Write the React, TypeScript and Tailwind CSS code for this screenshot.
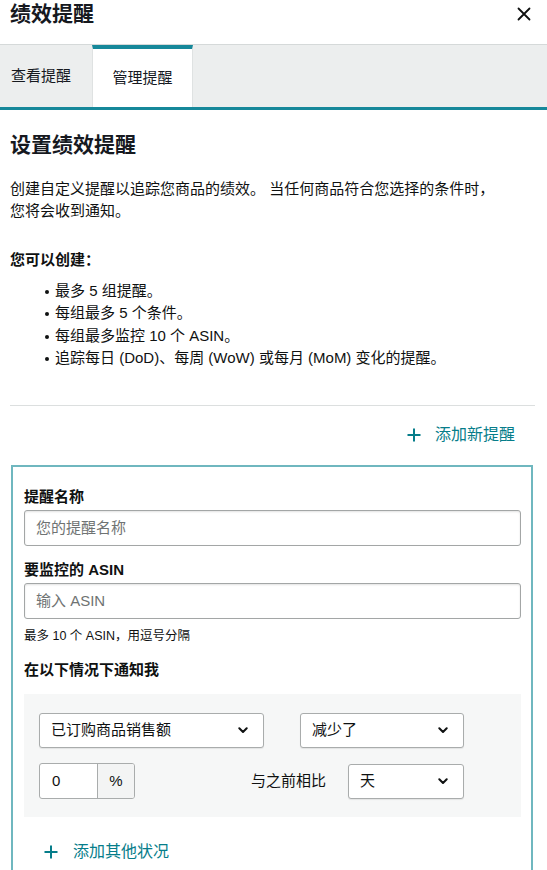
import React from "react";

const FONT = '"Liberation Sans", "Noto Sans CJK SC", sans-serif';

function Chevron() {
  return (
    <svg width="10" height="7" viewBox="0 0 10 7" className="shrink-0">
      <path d="M1.3 1.3 L5 5 L8.7 1.3" fill="none" stroke="#0f1111" strokeWidth="2" strokeLinecap="round" strokeLinejoin="round" />
    </svg>
  );
}

function Plus() {
  return (
    <svg width="14" height="14" viewBox="0 0 14 14" className="shrink-0">
      <path d="M7 0.5 V13.5 M0.5 7 H13.5" stroke="#067d8a" strokeWidth="2" />
    </svg>
  );
}

function Select({ label, w }: { label: string; w: string }) {
  return (
    <div
      className={`${w} h-[35px] bg-white border border-[#a9acac] rounded-[3px] shadow-[0_1px_1px_rgba(0,0,0,0.08)] flex items-center justify-between pl-[11px] pr-[15px] text-[15px] text-[#0f1111]`}
    >
      <span>{label}</span>
      <Chevron />
    </div>
  );
}

export default function App() {
  return (
    <div className="w-[547px] h-[870px] overflow-hidden bg-white text-[#0f1111]" style={{ fontFamily: FONT }}>
      {/* header */}
      <div className="h-[44px] flex items-start justify-between pl-[10px] pr-[16px]">
        <h1 className="text-[21px] leading-[28px] font-bold text-[#16191f]">绩效提醒</h1>
        <svg width="14" height="14" viewBox="0 0 14 14" className="mt-[7px]">
          <path d="M1.5 1.5 L12.5 12.5 M12.5 1.5 L1.5 12.5" stroke="#0f1111" strokeWidth="1.8" strokeLinecap="round" />
        </svg>
      </div>

      {/* tabs */}
      <div className="border-t border-[#d5d9d9] bg-[#eceeee] border-b-[3px] border-b-[#16889a] flex h-[66px]">
        <div className="pl-[11px] pr-[21px] flex items-center text-[15px] text-[#16191f]">查看提醒</div>
        <div className="w-[101px] bg-white border-t-[4px] border-t-[#16889a] border-x border-x-[#dfe2e2] flex items-center justify-center text-[15px] text-[#16191f]">
          管理提醒
        </div>
      </div>

      {/* content */}
      <div className="px-[10px]">
        <h2 className="mt-[21px] text-[21px] leading-[28px] font-bold text-[#16191f]">设置绩效提醒</h2>
        <p className="mt-[19px] w-[490px] text-[15px] leading-[22px] text-[#0f1111]">
          创建自定义提醒以追踪您商品的绩效。 当任何商品符合您选择的条件时，您将会收到通知。
        </p>
        <p className="mt-[27px] text-[15px] leading-[22px] font-bold">您可以创建：</p>
        <ul className="mt-[9px] pl-[35px] text-[15px] leading-[22.3px]">
          {[
            "最多 5 组提醒。",
            "每组最多 5 个条件。",
            "每组最多监控 10 个 ASIN。",
            "追踪每日 (DoD)、每周 (WoW) 或每月 (MoM) 变化的提醒。",
          ].map((t) => (
            <li key={t} className="flex items-start">
              <span className="w-[10px] shrink-0 flex justify-start pt-[10px]">
                <span className="w-[4px] h-[4px] rounded-full bg-[#0f1111]" />
              </span>
              <span>{t}</span>
            </li>
          ))}
        </ul>

        <div className="mt-[36px] mr-[2px] border-t border-[#dcdfdf]" />

        <div className="mt-[18px] flex justify-end items-center gap-[14px] pr-[22px] text-[16px] leading-[22px] text-[#067d8a]">
          <Plus />
          <span>添加新提醒</span>
        </div>

        {/* form card */}
        <div className="mt-[19px] ml-[1px] w-[522px] border-[2px] border-[#6fb7bf] border-b-0 pl-[11px] pr-[10px] pt-[19px] pb-[20px]">
          <div className="text-[15px] leading-[22px] font-bold">提醒名称</div>
          <div className="mt-[2px] h-[36px] border border-[#a3a6a6] rounded-[3px] shadow-[inset_0_1px_2px_rgba(15,17,17,0.12)] flex items-center pl-[11px] text-[15px] text-[#6f7373]">
            您的提醒名称
          </div>
          <div className="mt-[13px] text-[15px] leading-[22px] font-bold">要监控的 ASIN</div>
          <div className="mt-[2px] h-[36px] border border-[#a3a6a6] rounded-[3px] shadow-[inset_0_1px_2px_rgba(15,17,17,0.12)] flex items-center pl-[11px] text-[15px] text-[#6f7373]">
            输入 ASIN
          </div>
          <div className="mt-[8px] text-[12.5px] leading-[18px] text-[#0f1111]">最多 10 个 ASIN，用逗号分隔</div>
          <div className="mt-[14px] text-[15px] leading-[22px] font-bold">在以下情况下通知我</div>

          <div className="mt-[13px] bg-[#f6f7f7] pl-[15px] pt-[19px] pb-[18px]">
            <div className="flex gap-[36px]">
              <Select label="已订购商品销售额" w="w-[225px]" />
              <Select label="减少了" w="w-[164px]" />
            </div>
            <div className="mt-[15px] flex items-center justify-between w-[425px]">
              <div className="flex h-[36px] border border-[#a9acac] rounded-[3px] overflow-hidden bg-white text-[15px]">
                <div className="w-[57px] flex items-center pl-[12px]">0</div>
                <div className="w-[37px] border-l border-[#a9acac] bg-[#f3f4f4] flex items-center justify-center">%</div>
              </div>
              <div className="flex items-center gap-[22px]">
                <span className="text-[15px] text-[#0f1111]">与之前相比</span>
                <Select label="天" w="w-[116px]" />
              </div>
            </div>
          </div>

          <div className="mt-[24px] ml-[20px] flex items-center gap-[15px] text-[16px] leading-[22px] text-[#067d8a]">
            <Plus />
            <span>添加其他状况</span>
          </div>
        </div>
      </div>
    </div>
  );
}
